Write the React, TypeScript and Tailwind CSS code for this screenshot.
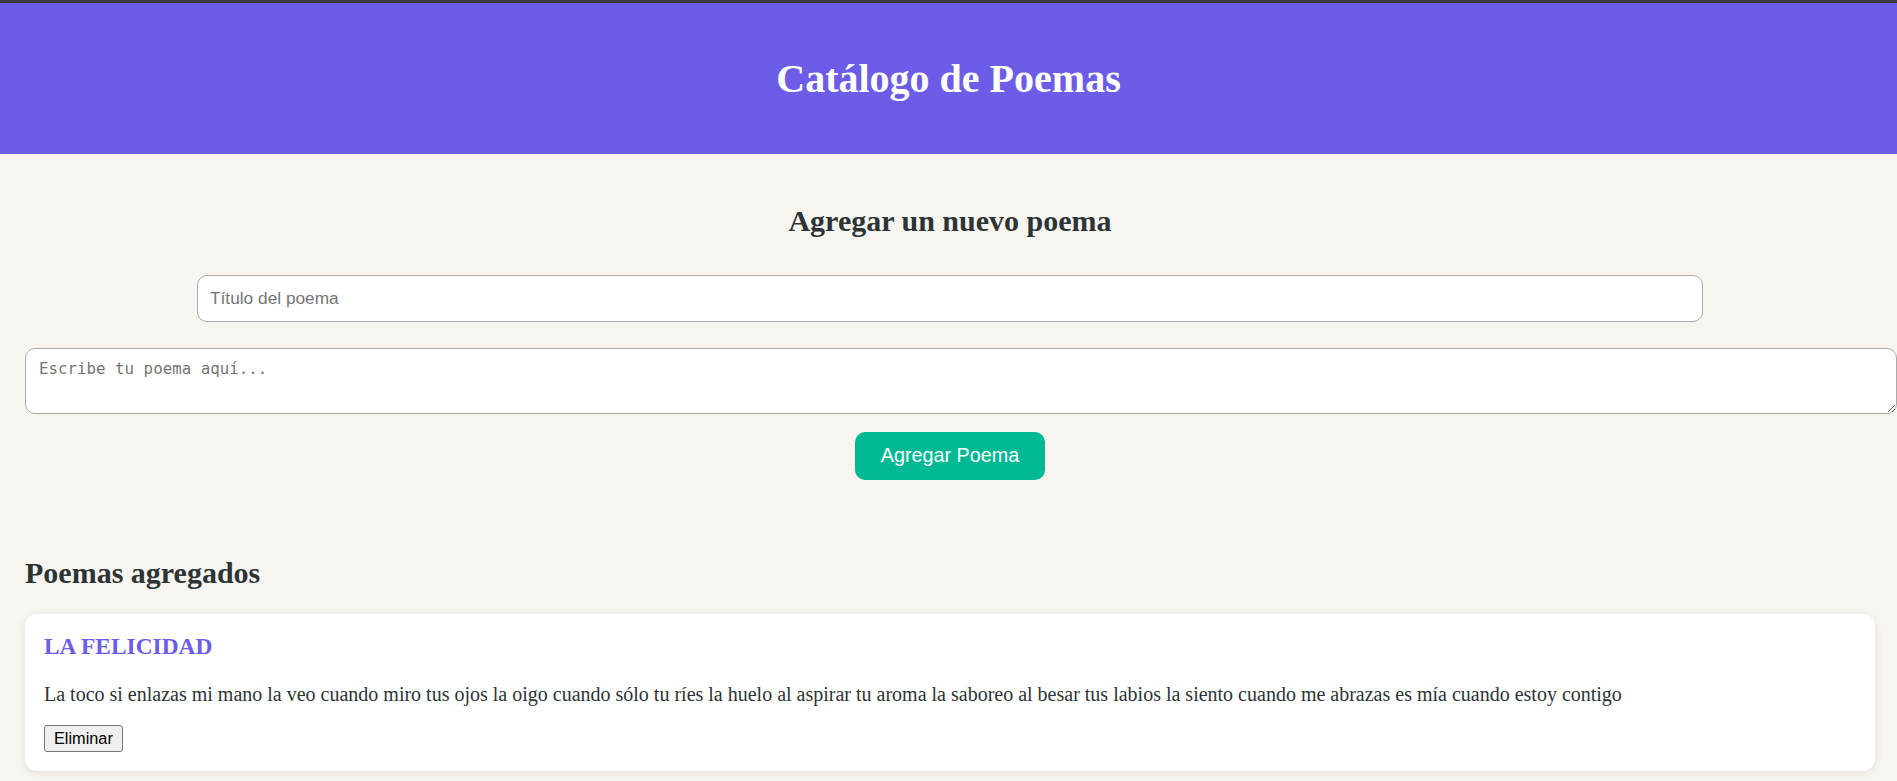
import React, { useState } from 'react';

interface Poema {
  id: number;
  titulo: string;
  texto: string;
}

const poemasIniciales: Poema[] = [
  {
    id: 1,
    titulo: 'LA FELICIDAD',
    texto:
      'La toco si enlazas mi mano la veo cuando miro tus ojos la oigo cuando sólo tu ríes la huelo al aspirar tu aroma la saboreo al besar tus labios la siento cuando me abrazas es mía cuando estoy contigo',
  },
];

const App: React.FC = () => {
  const [poemas, setPoemas] = useState<Poema[]>(poemasIniciales);
  const [titulo, setTitulo] = useState('');
  const [texto, setTexto] = useState('');

  const agregarPoema = () => {
    if (!titulo.trim() || !texto.trim()) return;
    setPoemas([...poemas, { id: Date.now(), titulo: titulo.toUpperCase(), texto }]);
    setTitulo('');
    setTexto('');
  };

  const eliminarPoema = (id: number) => {
    setPoemas(poemas.filter((p) => p.id !== id));
  };

  return (
    <div className="h-[781px] overflow-hidden bg-[#f8f5f0] border-t-[3px] border-[#3b3b3b] font-['Liberation_Serif',serif] text-[#2d3436]">
      <header className="h-[151px] bg-[#6c5ce7] flex items-center justify-center">
        <h1 className="text-[40px] leading-[46px] font-bold text-white">Catálogo de Poemas</h1>
      </header>

      <main className="pl-[25px] pr-[22px]">
        <section className="pt-[50px] flex flex-col items-center">
          <h2 className="text-[30px] leading-[34px] font-bold">Agregar un nuevo poema</h2>
          <input
            type="text"
            value={titulo}
            onChange={(e) => setTitulo(e.target.value)}
            placeholder="Título del poema"
            className="mt-[37px] w-[1506px] h-[47px] px-[12px] bg-white border border-[#aaaaaa] rounded-[10px] font-['Liberation_Sans',sans-serif] text-[17.3px] text-[#333] placeholder:text-[#757575] outline-none"
          />
          <textarea
            value={texto}
            onChange={(e) => setTexto(e.target.value)}
            placeholder="Escribe tu poema aquí..."
            className="self-start mt-[26px] w-[1872px] h-[66px] px-[13px] py-[10px] bg-white border border-[#aaaaaa] rounded-[10px] font-['DejaVu_Sans_Mono',monospace] text-[15.8px] leading-[20px] text-[#333] placeholder:text-[#757575] outline-none"
          />
          <button
            onClick={agregarPoema}
            className="mt-[18px] h-[48px] px-[26px] rounded-[10px] bg-[#00b894] text-white font-['Liberation_Sans',sans-serif] text-[19.8px]"
          >
            Agregar Poema
          </button>
        </section>

        <section className="mt-[76px]">
          <h2 className="text-[30px] leading-[34px] font-bold">Poemas agregados</h2>
          <div className="mt-[24px] flex flex-col gap-4">
            {poemas.map((poema) => (
              <div
                key={poema.id}
                className="bg-white rounded-[12px] px-[19px] pt-[19px] pb-[19px] shadow-[0_2px_8px_rgba(0,0,0,0.09)]"
              >
                <h3 className="text-[23.4px] leading-[26px] font-bold text-[#6c5ce7]">{poema.titulo}</h3>
                <p className="mt-[24px] text-[20px] leading-[22px] text-[#2d3436]">{poema.texto}</p>
                <button
                  onClick={() => eliminarPoema(poema.id)}
                  className="mt-[20px] h-[27px] px-[9px] bg-[#efefef] border border-[#767676] rounded-[3px] font-['Liberation_Sans',sans-serif] text-[16.3px] text-black leading-none"
                >
                  Eliminar
                </button>
              </div>
            ))}
          </div>
        </section>
      </main>
    </div>
  );
};

export default App;
